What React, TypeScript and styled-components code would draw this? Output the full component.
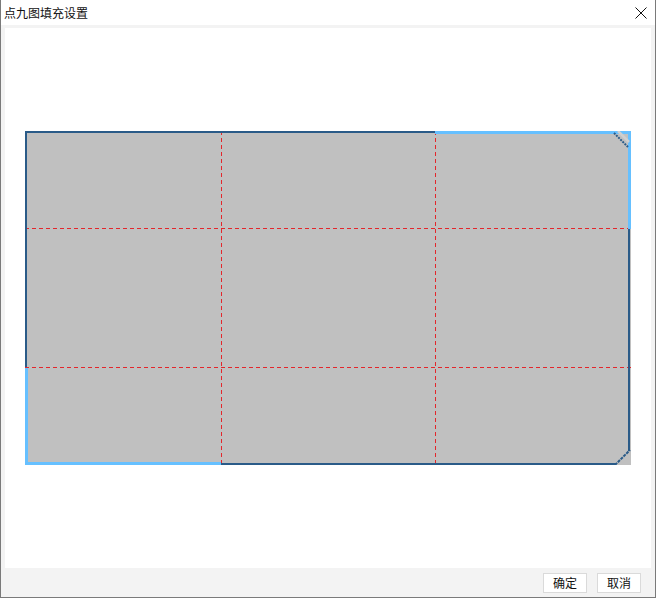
import React from 'react'
import styled, { createGlobalStyle } from 'styled-components'

const GlobalStyle = createGlobalStyle`
  html, body {
    margin: 0;
    padding: 0;
    background: #ffffff;
  }
  body {
    font-family: "Noto Sans CJK SC", "Liberation Sans", sans-serif;
  }
`

const IMG_W = 606
const IMG_H = 334
const COL_A = 196
const COL_B = 410
const ROW_A = 97
const ROW_B = 236

const DARK = '#2a5b88'
const LIGHT = '#66c0ff'
const GUIDE = '#e3262b'

const Window = styled.div`
  width: 656px;
  height: 598px;
  box-sizing: border-box;
  border-left: 1px solid #7a7a7a;
  border-right: 1px solid #7a7a7a;
  border-bottom: 1px solid #7a7a7a;
  background: #f3f3f3;
  display: flex;
  flex-direction: column;
`

const TitleBar = styled.div`
  height: 25px;
  flex: none;
  background: #ffffff;
  display: flex;
  align-items: center;
  justify-content: space-between;
  padding: 0 7px 0 3px;
`

const Title = styled.span`
  font-size: 12px;
  color: #111;
  line-height: 1;
`

const CloseButton = styled.button`
  width: 14px;
  height: 14px;
  padding: 0;
  border: none;
  background: none;
  display: flex;
  align-items: center;
  justify-content: center;
  cursor: pointer;
`

const Body = styled.div`
  flex: 1;
  display: flex;
  flex-direction: column;
  padding: 3px 4px 0 4px;
`

const Panel = styled.div`
  height: 540px;
  background: #ffffff;
  display: flex;
  align-items: center;
  justify-content: center;
`

const Footer = styled.div`
  flex: 1;
  display: flex;
  align-items: center;
  justify-content: flex-end;
  gap: 10px;
  padding-right: 10px;
`

const ActionButton = styled.button`
  width: 44px;
  height: 20px;
  padding: 0;
  background: #ffffff;
  border: 1px solid #dadada;
  font-family: "Noto Sans CJK SC", "Liberation Sans", sans-serif;
  font-size: 12px;
  color: #111;
  line-height: 18px;
  cursor: pointer;
`

const Canvas = styled.svg`
  display: block;
  flex: none;
`

function NinePatch() {
  return (
    <Canvas width={IMG_W} height={IMG_H} viewBox={`0 0 ${IMG_W} ${IMG_H}`}>
      <rect x={0} y={0} width={IMG_W} height={IMG_H} fill="#c0c0c0" />

      <g stroke={GUIDE} strokeWidth={1} strokeDasharray="4 3" fill="none">
        <line x1={COL_A + 0.5} y1={0} x2={COL_A + 0.5} y2={IMG_H} />
        <line x1={COL_B + 0.5} y1={0} x2={COL_B + 0.5} y2={IMG_H} />
        <line x1={0} y1={ROW_A + 0.5} x2={IMG_W} y2={ROW_A + 0.5} />
        <line x1={0} y1={ROW_B + 0.5} x2={IMG_W} y2={ROW_B + 0.5} />
      </g>

      {/* dark outline */}
      <g stroke={DARK} strokeWidth={2} fill="none">
        <line x1={0} y1={1} x2={COL_B} y2={1} />
        <line x1={1} y1={0} x2={1} y2={ROW_B} />
        <line x1={COL_A} y1={333} x2={591} y2={333} />
        <line x1={604} y1={ROW_A} x2={604} y2={320} />
        <line x1={590} y1={334} x2={605} y2={319} strokeDasharray="3 1" />
      </g>

      {/* stretch markers */}
      <g stroke={LIGHT} strokeWidth={3} fill="none">
        <line x1={COL_B} y1={1.5} x2={IMG_W} y2={1.5} />
        <line x1={604.5} y1={0} x2={604.5} y2={ROW_A + 1} />
        <line x1={1.5} y1={ROW_B + 1} x2={1.5} y2={IMG_H} />
        <line x1={0} y1={332.5} x2={COL_A} y2={332.5} />
      </g>

      {/* top-right chamfer */}
      <line x1={593} y1={0} x2={604} y2={11} stroke="#cfcfcf" strokeWidth={2.5} />
      <line x1={589} y1={2} x2={603} y2={16} stroke={DARK} strokeWidth={2} strokeDasharray="2 1" />
    </Canvas>
  )
}

export default function App() {
  return (
    <>
      <GlobalStyle />
      <Window>
        <TitleBar>
          <Title>点九图填充设置</Title>
          <CloseButton aria-label="关闭">
            <svg width="12" height="12" viewBox="0 0 12 12">
              <path d="M0.5 0.5 L11.5 11.5 M11.5 0.5 L0.5 11.5" stroke="#111" strokeWidth="1" fill="none" />
            </svg>
          </CloseButton>
        </TitleBar>
        <Body>
          <Panel>
            <NinePatch />
          </Panel>
          <Footer>
            <ActionButton>确定</ActionButton>
            <ActionButton>取消</ActionButton>
          </Footer>
        </Body>
      </Window>
    </>
  )
}
